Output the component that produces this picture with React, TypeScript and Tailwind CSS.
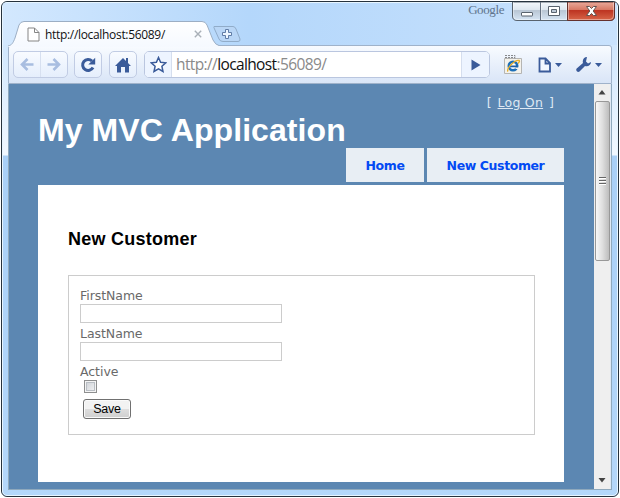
import React from "react";

const BLUE = "#3a5b9a";

function TitleBar() {
  return (
    <header className="relative flex h-[42px] shrink-0 bg-linear-to-r from-[#d3e8fe] via-[#b4d7fb] via-40% to-[#c9e2fd] pl-[5px]">
      <div className="relative mt-[18px] flex h-[26px] w-[213px] shrink-0 items-center">
        <svg className="absolute left-0 top-0" width="213" height="26" viewBox="0 0 213 26">
          <defs>
            <linearGradient id="tab" x1="0" y1="0" x2="0" y2="1">
              <stop offset="0" stopColor="#ffffff" />
              <stop offset="1" stopColor="#f5f9ff" />
            </linearGradient>
          </defs>
          <path d="M0 26V25C4 24 5 22 7 17L11 4Q12.500 .5 16 .5H194Q197.500 .5 199 4L205 19Q207.500 24 211 24.500V26Z" fill="url(#tab)" />
          <path d="M0 25C4 24 5 22 7 17L11 4Q12.500 .5 16 .5H194Q197.500 .5 199 4L205 19Q207.500 24 211 24.500" fill="none" stroke="#9caec4" />
        </svg>
        <svg className="relative ml-[19px]" width="13" height="15" viewBox="0 0 13 15">
          <path d="M1 1h6.500L12 5.500V14H1Z" fill="#fff" stroke="#858585" />
          <path d="M7.500 1v4.500H12" fill="none" stroke="#858585" />
        </svg>
        <span className="relative ml-[5px] w-[121px] whitespace-nowrap font-['Open_Sans',sans-serif] text-[12px] leading-[15px] tracking-[-0.32px] text-[#111]">http://localhost:56089/</span>
        <svg className="relative ml-[28px]" width="8" height="8" viewBox="0 0 8 8">
          <path d="M.8.8l6.400 6.400M7.200.8L.8 7.200" stroke="#a9b0b8" strokeWidth="1.400" />
        </svg>
      </div>
      <svg className="-ml-[8px] mt-[22px] shrink-0" width="28" height="19" viewBox="0 0 28 19">
        <path d="M1 1.500H20Q22 1.500 23 4L27 14Q27.500 16.500 25 16.500H10Q7 16.500 6 14L1.500 4Q.5 2 1 1.500Z" fill="#b9d6f6" stroke="#91acc9" />
        <path d="M12.500 4.500h3v3h3v3h-3v3h-3v-3h-3v-3h3Z" fill="#edf6ff" stroke="#617da7" />
      </svg>
      <span className="-mt-px ml-auto mr-[8px] font-['Liberation_Serif',serif] text-[13px] leading-[15px] tracking-[-0.4px] text-[#60748d]">Google</span>
      <WindowControls />
    </header>
  );
}

function WindowControls() {
  return (
    <svg className="-mt-[1px] mr-[1px] shrink-0" width="104" height="20" viewBox="0 0 104 20">
      <defs>
        <linearGradient id="ctl" x1="0" y1="0" x2="0" y2="1">
          <stop offset="0" stopColor="#f3f7fb" />
          <stop offset=".45" stopColor="#dce5ee" />
          <stop offset=".46" stopColor="#b9c6d4" />
          <stop offset="1" stopColor="#d7e6f5" />
        </linearGradient>
        <linearGradient id="close" x1="0" y1="0" x2="0" y2="1">
          <stop offset="0" stopColor="#e9aa9b" />
          <stop offset=".43" stopColor="#d77763" />
          <stop offset=".46" stopColor="#bd3422" />
          <stop offset="1" stopColor="#d8674a" />
        </linearGradient>
      </defs>
      <path d="M.5 0V14Q.5 18.500 5 18.500H98Q102.500 18.500 102.500 14V0Z" fill="url(#ctl)" stroke="#59636e" />
      <path d="M55.500 0V18.500H98Q102.500 18.500 102.500 14V0Z" fill="url(#close)" stroke="#65312d" />
      <path d="M28.500 0v18" stroke="#657181" />
      <path d="M1.500 0V14Q2 17.500 5 17.500H27.500M29.500 1V17.500H54.500V1M56.500 1V17.500H98Q101.500 17 101.500 14V0" fill="none" stroke="#fff" opacity=".4" />
      <rect x="9.500" y="10.500" width="11" height="3.500" rx=".5" fill="#fff" stroke="#59636e" />
      <path d="M36.500 4.500h11v9h-11ZM39.500 7.500v3h5v-3Z" fill="#fff" fillRule="evenodd" stroke="#59636e" />
      <path d="M74.500 4.500h3l2 2 2-2h3l-3.300 4.500 3.300 4.500h-3l-2-2-2 2h-3l3.300-4.500Z" fill="#fff" stroke="#64534f" />
    </svg>
  );
}

function Toolbar() {
  const box = "flex h-[27px] shrink-0 items-center rounded-[5px] border border-[#c1cce4] bg-linear-to-b from-[#f8fbff] to-[#e5eefc]";
  return (
    <div className="ml-[5px] mr-[5px] flex h-[39px] shrink-0 items-center rounded-t-[3px] border border-[#9fb2ca] bg-linear-to-b from-[#f8fbff] to-[#d9e5f7] pl-[4px]">
      <div className={`${box} w-[55px]`}>
        <div className="flex h-full flex-1 items-center justify-center border-r border-[#d7e0f0]">
          <svg width="14" height="13" viewBox="0 0 14 13" fill="none" stroke="#a8bde0" strokeWidth="2.600"><path d="M13.500 6.500H2M7.500 1L2 6.500l5.500 5.500" /></svg>
        </div>
        <div className="flex h-full flex-1 items-center justify-center">
          <svg width="14" height="13" viewBox="0 0 14 13" fill="none" stroke="#a8bde0" strokeWidth="2.600"><path d="M.5 6.500H12M6.500 1L12 6.500 6.500 12" /></svg>
        </div>
      </div>
      <div className={`${box} ml-[6px] w-[28px] justify-center`}>
        <svg width="16" height="16" viewBox="0 0 16 16"><path d="M12 4A5.500 5.500 0 1 0 13 10.500" fill="none" stroke={BLUE} strokeWidth="3" /><path d="M15.200 .8V7.500H8.300Z" fill={BLUE} /></svg>
      </div>
      <div className={`${box} ml-[7px] w-[28px] justify-center`}>
        <svg width="16" height="16" viewBox="0 0 16 16" fill={BLUE}><path d="M8 1L0 9h2v6.500h4V10h4v5.500h4V9h2l-3-3V1h-2v3Z" /></svg>
      </div>
      <div className="ml-[7px] flex h-[27px] w-[346px] shrink-0 items-stretch overflow-hidden rounded-[5px] border border-[#bac6df] bg-white">
        <div className="flex w-[27px] items-center justify-center border-r border-[#d5deee] bg-[#edf4ff]">
          <svg width="17" height="17" viewBox="0 0 17 17"><path d="M8.500 1.500l2.100 4.800 5.200.5-3.900 3.500 1.100 5.200-4.500-2.700L4 15.500l1.100-5.200L1.200 6.800l5.200-.5Z" fill="#fff" stroke={BLUE} strokeWidth="1.500" /></svg>
        </div>
        <div className="flex-1 pl-[4px] font-['Open_Sans',sans-serif] text-[15.500px] leading-[25px] tracking-[-0.62px] text-[#8a8a8a]">http://<span className="text-[#111]">localhost</span>:56089/</div>
        <div className="flex w-[28px] items-center justify-center border-l border-[#d5deee] bg-[#edf4ff]">
          <svg width="10" height="12" viewBox="0 0 10 12"><path d="M.5.5L9.500 6 .5 11.500Z" fill={BLUE} /></svg>
        </div>
      </div>
      <svg className="ml-[13px] shrink-0" width="20" height="21" viewBox="0 0 20 21">
        <path d="M1.500 4.500H18.500V19.500H1.500Z" fill="#f4f2ec" stroke="#b5b5b3" />
        <path d="M2 1.500h10v3M2 3.500h10" fill="none" stroke="#87898c" strokeDasharray="2 1" />
        <circle cx="10" cy="12" r="4.200" fill="#fff" stroke="#1c6fb8" strokeWidth="2.600" />
        <path d="M7 12.300h7.500" stroke="#1c5fa5" strokeWidth="1.800" />
        <path d="M12.500 14.300h4" stroke="#f4f2ec" strokeWidth="1.600" />
        <path d="M5 17.500c-2-3 7-12 11-11 1 .5 0 2-1 3" fill="none" stroke="#e6b02e" strokeWidth="1.400" />
      </svg>
      <svg className="ml-[15px] shrink-0" width="25" height="16" viewBox="0 0 25 16">
        <path d="M1.500 1.500h6L12 6v8.500H1.500ZM7.500 2v4.500H12" fill="#f2f7ff" stroke={BLUE} strokeWidth="1.800" />
        <path d="M17 6h7l-3.500 4Z" fill={BLUE} />
      </svg>
      <svg className="ml-[13px] shrink-0" width="27" height="16" viewBox="0 0 27 16" fill={BLUE}>
        <path d="M11 0C8 0 6 3 7 6L.7 11.500C-.8 13 1.500 16 3.500 14.500L9 9c3 1 6-1 6-4l-3 1.500-2-2Z" />
        <path d="M19 6h7l-3.500 4Z" />
      </svg>
    </div>
  );
}

function Scrollbar() {
  return (
    <div className="flex w-[17px] shrink-0 flex-col items-center border-r border-[#dfe9f5] bg-[#efefef]">
      <svg className="mt-[6px] shrink-0" width="8" height="5" viewBox="0 0 8 5"><path d="M4 0l3.500 4.500h-7Z" fill="#444" /></svg>
      <div className="mt-[6px] flex h-[160px] w-[15px] shrink-0 flex-col items-center justify-center gap-[1px] rounded-[2px] border border-[#989898] bg-linear-to-r from-[#f8f8f8] via-[#dedede] to-[#bdbdbd]">
        <i className="h-[2px] w-[7px] border-b border-white bg-[#666]" />
        <i className="h-[2px] w-[7px] border-b border-white bg-[#666]" />
        <i className="h-[2px] w-[7px] border-b border-white bg-[#666]" />
      </div>
      <svg className="mb-[6px] mt-auto" width="8" height="5" viewBox="0 0 8 5"><path d="M4 4.500L.5 0h7Z" fill="#444" /></svg>
    </div>
  );
}

function CustomerForm() {
  const label = "block h-[16px] text-[12.500px] leading-[18px] tracking-[-0.05px] text-[#696969]";
  const input = "mb-[2px] mt-[1px] block h-[19px] w-[202px] border border-[#cccccc] bg-white outline-none";
  return (
    <form className="h-[160px] w-[467px] border border-[#cccccc] pl-[11px] pt-[11px]" onSubmit={(e) => e.preventDefault()}>
      <label className={label} htmlFor="first">FirstName</label>
      <input id="first" className={input} />
      <label className={label} htmlFor="last">LastName</label>
      <input id="last" className={input} />
      <label className={label} htmlFor="active">Active</label>
      <input id="active" type="checkbox" className="ml-[4px] mt-px block h-[13px] w-[13px] appearance-none border border-[#8e8f8f] bg-linear-to-br from-[#cbcfd5] to-[#f6f6f6] shadow-[inset_0_0_0_1px_#f4f4f4,inset_0_0_0_2px_#b9bec4]" />
      <button className="ml-[3px] mt-[6px] flex h-[20px] w-[48px] items-center justify-center rounded-[3px] border border-[#707070] bg-linear-to-b from-[#f2f2f2] from-50% via-[#dedede] via-50% to-[#cfcfcf] pt-px font-['Liberation_Sans',sans-serif] text-[12.500px] leading-none tracking-[-0.2px] text-black shadow-[inset_0_0_0_1px_#fafafa]">Save</button>
    </form>
  );
}

function Page() {
  return (
    <main className="flex min-w-0 flex-1 flex-col bg-[#5c87b2] pl-[29px] pr-[30px] font-['DejaVu_Sans',Verdana,sans-serif]">
      <div className="mt-[10px] flex h-[17px] justify-end pr-[10px] text-[12.500px] leading-[18px] text-[#dfe9f3]">
        <span>[</span>
        <a className="ml-[6px] mr-[6px] tracking-[0.25px] underline">Log On</a>
        <span>]</span>
      </div>
      <h1 className="h-[37px] whitespace-nowrap font-['Liberation_Sans',sans-serif] text-[32px] font-bold leading-[38px] tracking-[0.08px] text-white">My MVC Application</h1>
      <nav className="flex h-[34px] justify-end gap-[3px] text-[12.500px] font-bold tracking-[-0.4px] text-[#034af3]">
        <a className="flex w-[78px] items-center justify-center bg-[#e8eef4] pt-[3px]">Home</a>
        <a className="flex w-[137px] items-center justify-center bg-[#e8eef4] pt-[3px]">New Customer</a>
      </nav>
      <section className="mt-[3px] h-[297px] bg-white pl-[30px] pt-[44px]">
        <h2 className="mb-[25px] font-['Liberation_Sans',sans-serif] text-[18px] font-bold leading-[21px] tracking-[0.25px] text-black">New Customer</h2>
        <CustomerForm />
      </section>
    </main>
  );
}

export default function App() {
  return (
    <div className="h-[498px] w-[620px] bg-white p-px">
      <div className="h-[496px] w-[618px] overflow-hidden rounded-[6px] border border-[#26323d] bg-[linear-gradient(to_bottom,#cfe6fd_0px,#cfe6fd_40px,#f1f8ff_153px,#a9d0f7_154px,#b4d7fa_100%)]">
        <div className="flex h-full flex-col rounded-[5px] border border-[#e7f5ff]">
          <TitleBar />
          <Toolbar />
          <div className="ml-[5px] mr-[5px] flex h-[406px] shrink-0 border border-t-0 border-[#8fa9bd]">
            <Page />
            <Scrollbar />
          </div>
        </div>
      </div>
    </div>
  );
}
